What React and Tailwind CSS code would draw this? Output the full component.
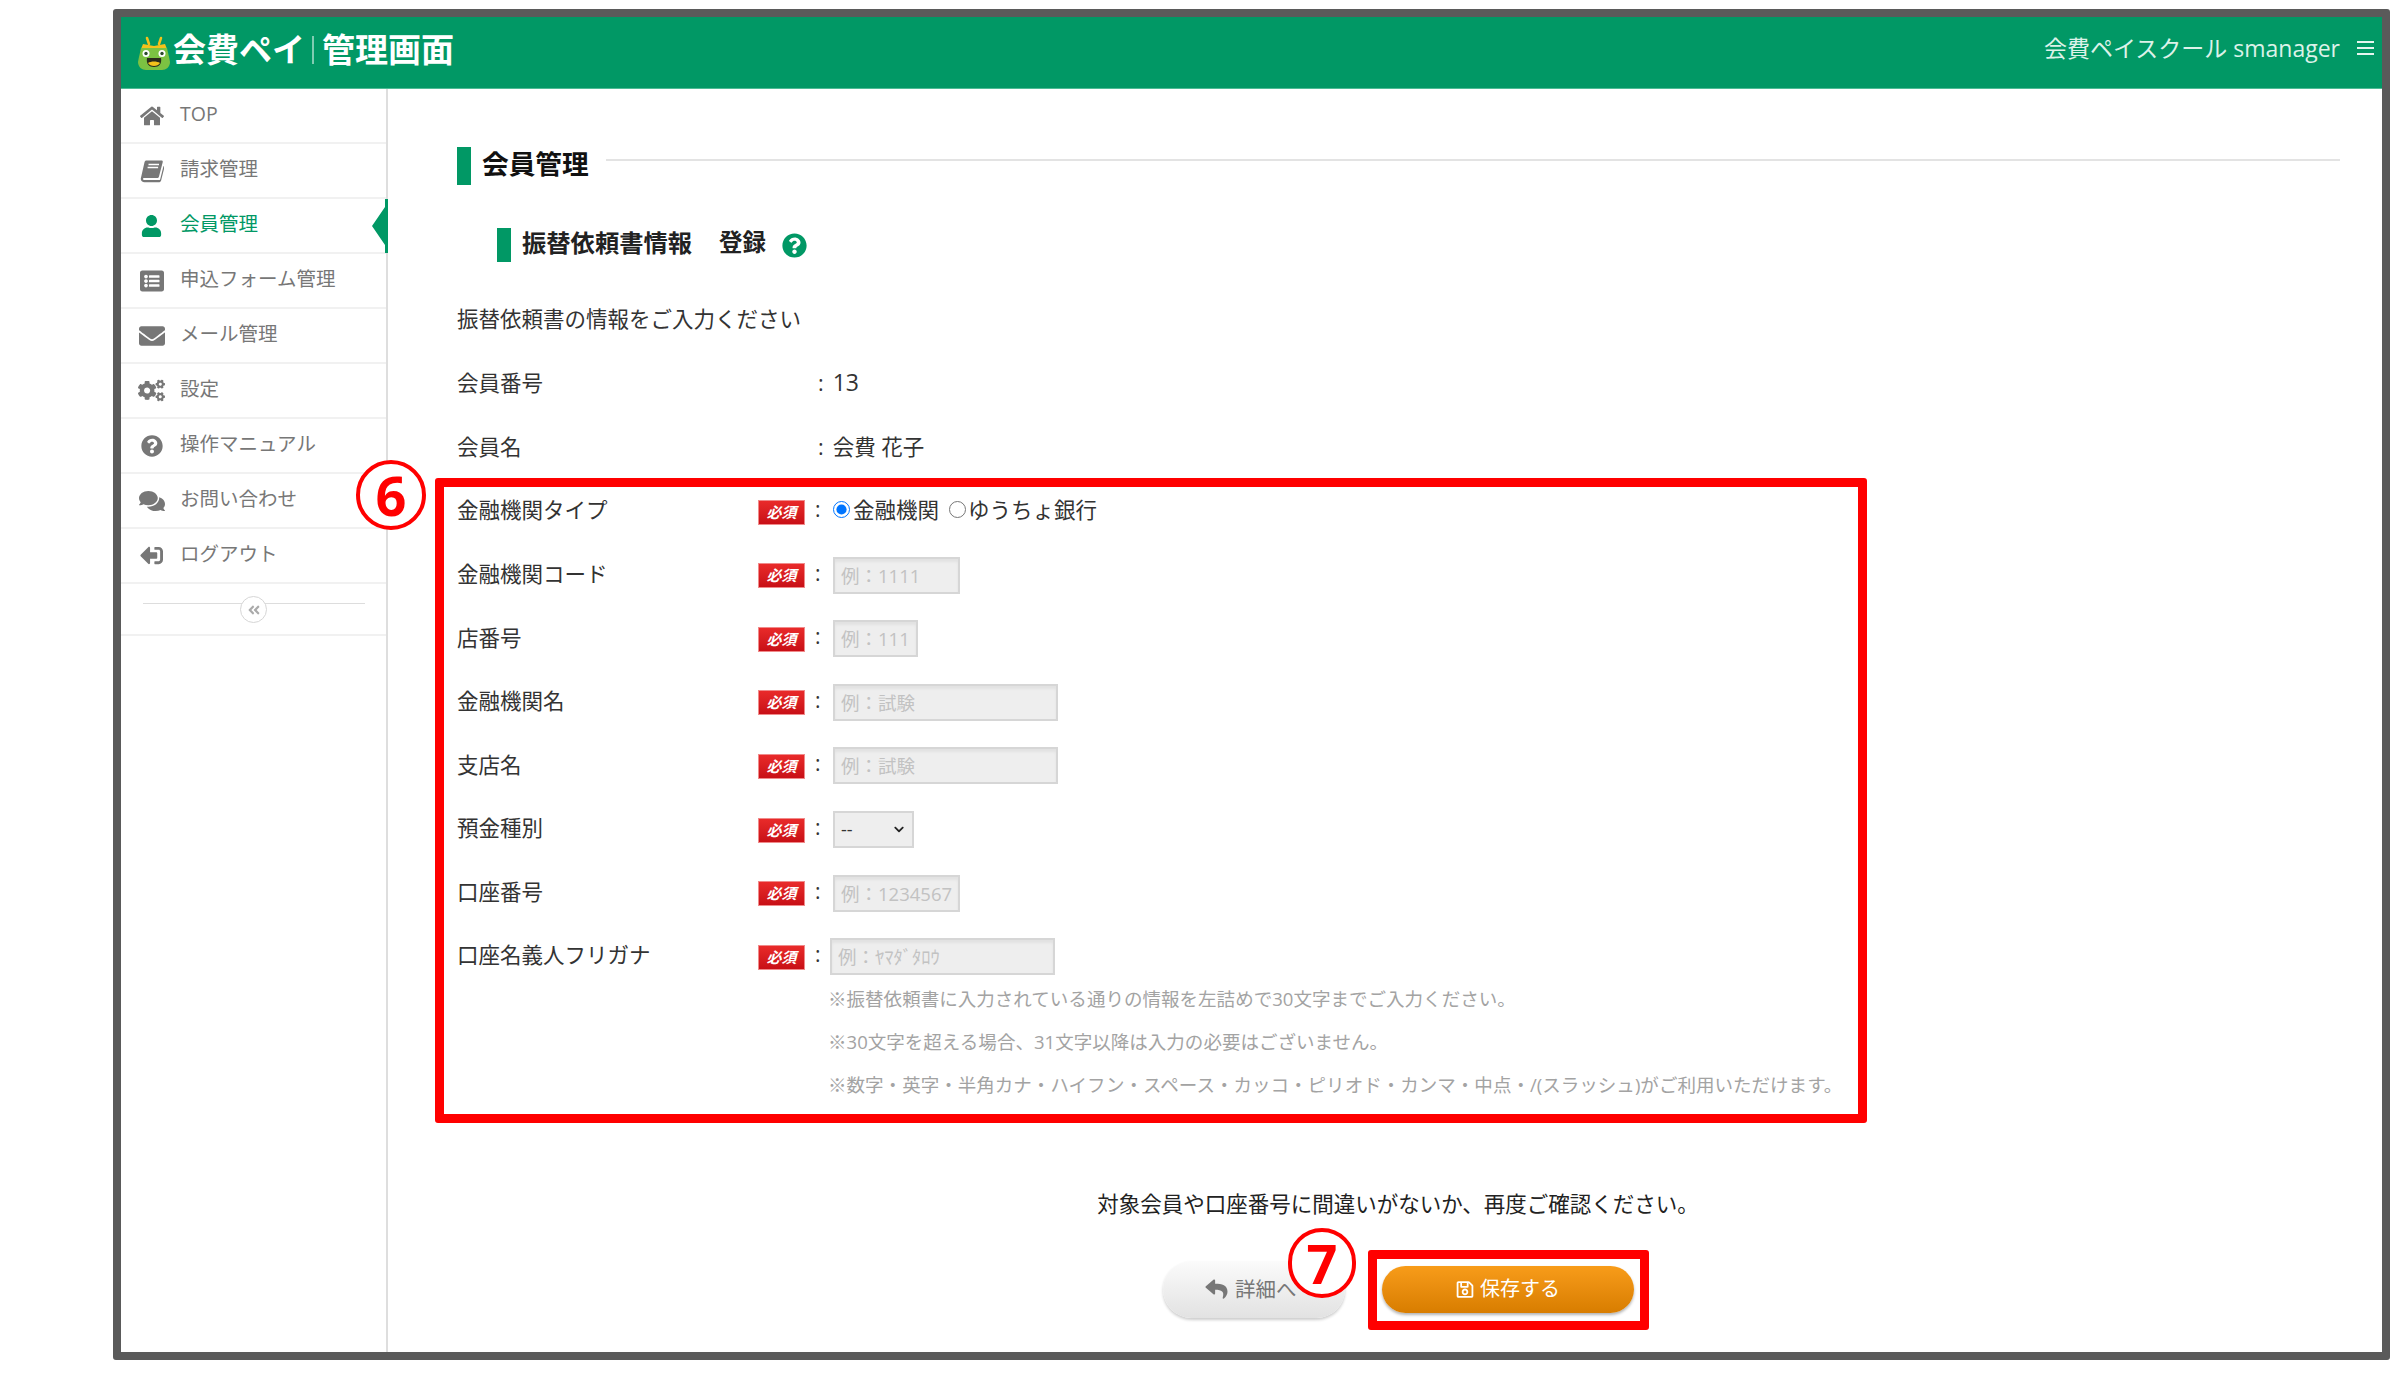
import React from "react";
import {
  FaHome, FaUser, FaListAlt, FaEnvelope, FaCogs, FaQuestionCircle, FaComments,
  FaSignOutAlt, FaReply, FaRegSave, FaAngleDoubleLeft, FaChevronDown,
} from "react-icons/fa";

function BookIcon({ className }) {
  return (
    <svg viewBox="0 0 24 24" className={className} fill="currentColor">
      <path d="M6.5 1.500h15c1 0 1.500.8 1.200 1.700L19 17.500c-.3 1-1 1.500-2 1.500H4.500c-1.200 0-1.600.6-1.500 1.100.1.600.7 1 1.500 1h14.500c.6 0 1-.4 1.200-.9l3.300-13.200.5.500c.3.300.4.700.3 1.200l-3.200 12.700c-.3 1.100-1.200 1.800-2.300 1.800H4.500C2.300 23.200.5 21.800.8 19.500L4.500 3.200C4.800 2.200 5.500 1.500 6.500 1.500z" />
      <path d="M8.500 5.500h10.500M7.600 8.500h10.500" stroke="#fff" strokeWidth="1.300" fill="none" />
    </svg>
  );
}

function FrogLogo() {
  return (
    <svg viewBox="0 0 32 34" className="w-[32px] h-[34px] shrink-0">
      <path d="M11 8 L9 2" stroke="#f4c21b" strokeWidth="2.500" strokeLinecap="round" />
      <path d="M21 8 L23 2" stroke="#f4c21b" strokeWidth="2.500" strokeLinecap="round" />
      <path d="M3 13 L5 8 L16 10 L27 8 L29 13 Z" fill="#f4c21b" />
      <path d="M3 12 H29 C30 17 31 20 32 26 C32 31 28 34 24 34 H8 C4 34 0 31 0 26 C1 20 2 17 3 12 Z" fill="#7cc242" />
      <circle cx="8" cy="17.500" r="3.500" fill="#fff" />
      <circle cx="24" cy="17.500" r="3.500" fill="#fff" />
      <circle cx="8" cy="17.500" r="1.700" fill="#2b4a2b" />
      <circle cx="24" cy="17.500" r="1.700" fill="#2b4a2b" />
      <path d="M9 22 H23 C24 28 21 31 16 31 C11 31 8 28 9 22 Z" fill="#2a2a1a" />
      <path d="M10 27 C13 25 19 25 22 27 C20 31 12 31 10 27 Z" fill="#f4c21b" />
    </svg>
  );
}

const nav = [
  { label: "TOP", Icon: FaHome, cls: "w-[24px] h-[24px]" },
  { label: "請求管理", Icon: BookIcon, cls: "w-[24px] h-[24px]" },
  { label: "会員管理", Icon: FaUser, cls: "w-[21px] h-[22px]", active: true },
  { label: "申込フォーム管理", Icon: FaListAlt, cls: "w-[26px] h-[24px]" },
  { label: "メール管理", Icon: FaEnvelope, cls: "w-[26px] h-[26px]" },
  { label: "設定", Icon: FaCogs, cls: "w-[27px] h-[25px]" },
  { label: "操作マニュアル", Icon: FaQuestionCircle, cls: "w-[22px] h-[22px]" },
  { label: "お問い合わせ", Icon: FaComments, cls: "w-[26px] h-[24px]" },
  { label: "ログアウト", Icon: FaSignOutAlt, cls: "w-[23px] h-[23px] -scale-x-100" },
];

function Badge() {
  return (
    <span className="w-[47px] h-[25px] mt-[3px] shrink-0 flex items-center justify-center bg-gradient-to-b from-[#e92a2a] to-[#c80f16] border border-[#f08a8a] text-white text-[15px] leading-none font-bold italic">
      必須
    </span>
  );
}

function Label({ children }) {
  return <div className="text-[21.500px] text-[#333] leading-none pb-[1px]">{children}</div>;
}

function Field({ label, children }) {
  return (
    <div className="flex items-center h-[63.600px]">
      <div className="w-[301px] shrink-0"><Label>{label}</Label></div>
      <Badge />
      <span className="w-[28px] shrink-0 pl-[10px] text-[21px] text-[#333] leading-none pb-[2px]">:</span>
      {children}
    </div>
  );
}

function TextInput({ placeholder, w, shift = "" }) {
  return (
    <input
      readOnly
      placeholder={placeholder}
      className={`${w} ${shift} h-[37px] mt-[2px] px-[6px] bg-[#eeeeee] border-2 border-[#d6d6d6] text-[18.500px] shadow-[inset_0_3px_3px_rgba(0,0,0,0.05)] placeholder:text-[#c2c2c2] outline-none`}
    />
  );
}

function Plain({ label, colonValue }) {
  return (
    <div className="flex items-center h-[63.600px]">
      <div className="w-[361px] shrink-0"><Label>{label}</Label></div>
      <div className="text-[21.500px] text-[#333] leading-none pb-[1px]">
        <span className="mr-[9px]">:</span>{colonValue}
      </div>
    </div>
  );
}

export default function App() {
  return (
    <div className="w-[2398px] h-[1373px] bg-white overflow-hidden pt-[9px] pl-[113px] font-['Open_Sans','Noto_Sans_CJK_JP',sans-serif]">
      <div className="w-[2277px] h-[1351px] border-8 border-[#5a5a5a] rounded-[3px] flex flex-col">
        <header className="h-[72px] shrink-0 bg-[#019865] border-b border-[#4dbb95] flex items-center justify-between pl-[17px] pr-[8px]">
          <div className="flex items-center">
            <FrogLogo />
            <div className="flex items-center pb-[6px]">
              <span className="ml-[3px] text-[33px] leading-none text-white font-bold">会費ペイ</span>
              <span className="ml-[7px] w-[2px] h-[28px] bg-white/50" />
              <span className="ml-[8px] text-[33px] leading-none text-white font-bold">管理画面</span>
            </div>
          </div>
          <div className="flex items-center pb-[9px]">
            <span className="text-[23px] leading-none text-[#dcf2e9]">会費ペイスクール smanager</span>
            <span className="ml-[17px] w-[17px] flex flex-col gap-[4px]">
              <span className="h-[2px] bg-[#e6f5ef]" />
              <span className="h-[2px] bg-[#e6f5ef]" />
              <span className="h-[2px] bg-[#e6f5ef]" />
            </span>
          </div>
        </header>
        <div className="flex-1 flex min-h-0">
          <aside className="w-[267px] shrink-0 border-r-2 border-[#dedede]">
            {nav.map(({ label, Icon, cls, active }) => (
              <div
                key={label}
                className={`relative h-[55px] border-b-2 border-[#f1f1f1] flex items-center pl-[17px] ${active ? "text-[#019865]" : "text-[#777]"}`}
              >
                <span className="w-[27px] h-[27px] flex items-center justify-center shrink-0">
                  <Icon className={cls} />
                </span>
                <span className="ml-[15px] text-[19.500px] leading-none pb-[4px]">{label}</span>
                {active && (
                  <span className="absolute right-[-2px] top-0 h-[54px] flex items-center">
                    <svg viewBox="0 0 16 54" className="w-[16px] h-[54px]" fill="#019865">
                      <path d="M13 0H16V54H13V46L0 27L13 8Z" />
                    </svg>
                  </span>
                )}
              </div>
            ))}
            <div className="relative h-[52px] border-b-2 border-[#f1f1f1] flex justify-center pt-[12px]">
              <div className="w-[222px] h-[1px] bg-[#dddddd] mt-[7px]" />
              <span className="absolute left-[119px] top-[12px] w-[27px] h-[27px] rounded-full border border-[#d6d6d6] bg-white flex items-center justify-center text-[#aaa]">
                <FaAngleDoubleLeft className="w-[14px] h-[14px]" />
              </span>
            </div>
          </aside>

          <main className="relative flex-1 pl-[69px] pr-[42px] pt-[58px]">
            <div className="flex items-start h-[38px]">
              <span className="w-[14px] h-[38px] bg-[#019865] shrink-0" />
              <h1 className="ml-[11px] text-[26.700px] font-bold text-[#111] leading-[34px]">会員管理</h1>
              <span className="ml-[17px] flex-1 h-[2px] bg-[#e3e3e3] mt-[12px]" />
            </div>
            <div className="flex items-center h-[34px] mt-[43px] ml-[40px]">
              <span className="w-[14px] h-[34px] bg-[#019865] shrink-0" />
              <h2 className="ml-[11px] text-[24.300px] font-bold text-[#222] leading-none pb-[4px] whitespace-pre">振替依頼書情報</h2>
              <h2 className="ml-[27px] text-[23.500px] font-bold text-[#222] leading-none pb-[4px]">登録</h2>
              <FaQuestionCircle className="ml-[16px] w-[25px] h-[25px] text-[#019865]" />
            </div>

            <div className="mt-[26px] text-[21.500px] text-[#333] leading-none flex items-center h-[63.600px] pb-[2px]">
              振替依頼書の情報をご入力ください
            </div>
            <Plain label="会員番号" colonValue={<span className="text-[23px]">13</span>} />
            <Plain label="会員名" colonValue="会費 花子" />

            <Field label="金融機関タイプ">
              <div className="flex items-center text-[21.500px] text-[#333] leading-none pb-[2px]">
                <input type="radio" name="t" defaultChecked className="w-[17px] h-[17px] m-0 shrink-0" />
                <span className="ml-[3px]">金融機関</span>
                <input type="radio" name="t" className="w-[17px] h-[17px] m-0 ml-[10px] shrink-0" />
                <span className="ml-[2px]">ゆうちょ銀行</span>
              </div>
            </Field>
            <Field label="金融機関コード"><TextInput placeholder="例：1111" w="w-[127px]" /></Field>
            <Field label="店番号"><TextInput placeholder="例：111" w="w-[85px]" /></Field>
            <Field label="金融機関名"><TextInput placeholder="例：試験" w="w-[225px]" /></Field>
            <Field label="支店名"><TextInput placeholder="例：試験" w="w-[225px]" /></Field>
            <Field label="預金種別">
              <div className="relative mt-[2px]">
                <select className="block w-[81px] h-[37px] pl-[6px] appearance-none bg-[#eeeeee] border-2 border-[#d6d6d6] text-[18px] text-[#333] outline-none">
                  <option>--</option>
                </select>
                <FaChevronDown className="absolute right-[9px] top-[13px] w-[12px] h-[11px] text-[#222] pointer-events-none" />
              </div>
            </Field>
            <Field label="口座番号"><TextInput placeholder="例：1234567" w="w-[127px]" /></Field>
            <Field label="口座名義人フリガナ"><TextInput placeholder="例：ﾔﾏﾀﾞﾀﾛｳ" w="w-[225px]" shift="-ml-[3px]" /></Field>

            <div className="-mt-[11px] ml-[371px] text-[18.550px] leading-[43px] text-[#a3a3a3] whitespace-nowrap">
              <p>※振替依頼書に入力されている通りの情報を左詰めで30文字までご入力ください。</p>
              <p>※30文字を超える場合、31文字以降は入力の必要はございません。</p>
              <p>※数字・英字・半角カナ・ハイフン・スペース・カッコ・ピリオド・カンマ・中点・/(スラッシュ)がご利用いただけます。</p>
            </div>

            <p className="mt-[82px] text-center text-[21.500px] leading-[32px] text-[#222] pr-[1px]">
              対象会員や口座番号に間違いがないか、再度ご確認ください。
            </p>

            <div className="mt-[41px] flex items-center justify-center gap-[37px]">
              <button className="w-[182px] h-[57px] rounded-full bg-gradient-to-b from-[#fbfbfb] to-[#e2e2e2] shadow-[0_2px_3px_rgba(0,0,0,0.2)] flex items-center pl-[42px] text-[#777] text-[20.500px] leading-none">
                <FaReply className="w-[23px] h-[22px] mr-[7px]" />
                詳細へ
              </button>
              <button className="w-[252px] h-[47px] rounded-full bg-gradient-to-b from-[#f89c19] to-[#d87d00] shadow-[0_2px_3px_rgba(0,0,0,0.3)] flex items-center justify-center text-white text-[20px] leading-none">
                <FaRegSave className="w-[18px] h-[19px] mr-[6px]" />
                保存する
              </button>
            </div>

            <div className="absolute pointer-events-none left-[47px] top-[389px] w-[1432px] h-[645px] border-[9px] border-[#ff0000] rounded-[3px]" />
            <div className="absolute pointer-events-none left-[980px] top-[1161px] w-[281px] h-[80px] border-[9px] border-[#ff0000] rounded-[3px]" />
            <div className="absolute left-[-32px] top-[371px] w-[70px] h-[70px] rounded-full border-[4px] border-[#ff0000] bg-white flex items-center justify-center text-[#ff0000] text-[54px] font-bold leading-none">
              6
            </div>
            <div className="absolute left-[900px] top-[1139px] w-[68px] h-[70px] rounded-full border-[4px] border-[#ff0000] bg-white flex items-center justify-center text-[#ff0000] text-[54px] font-bold leading-none">
              7
            </div>
          </main>
        </div>
      </div>
    </div>
  );
}
